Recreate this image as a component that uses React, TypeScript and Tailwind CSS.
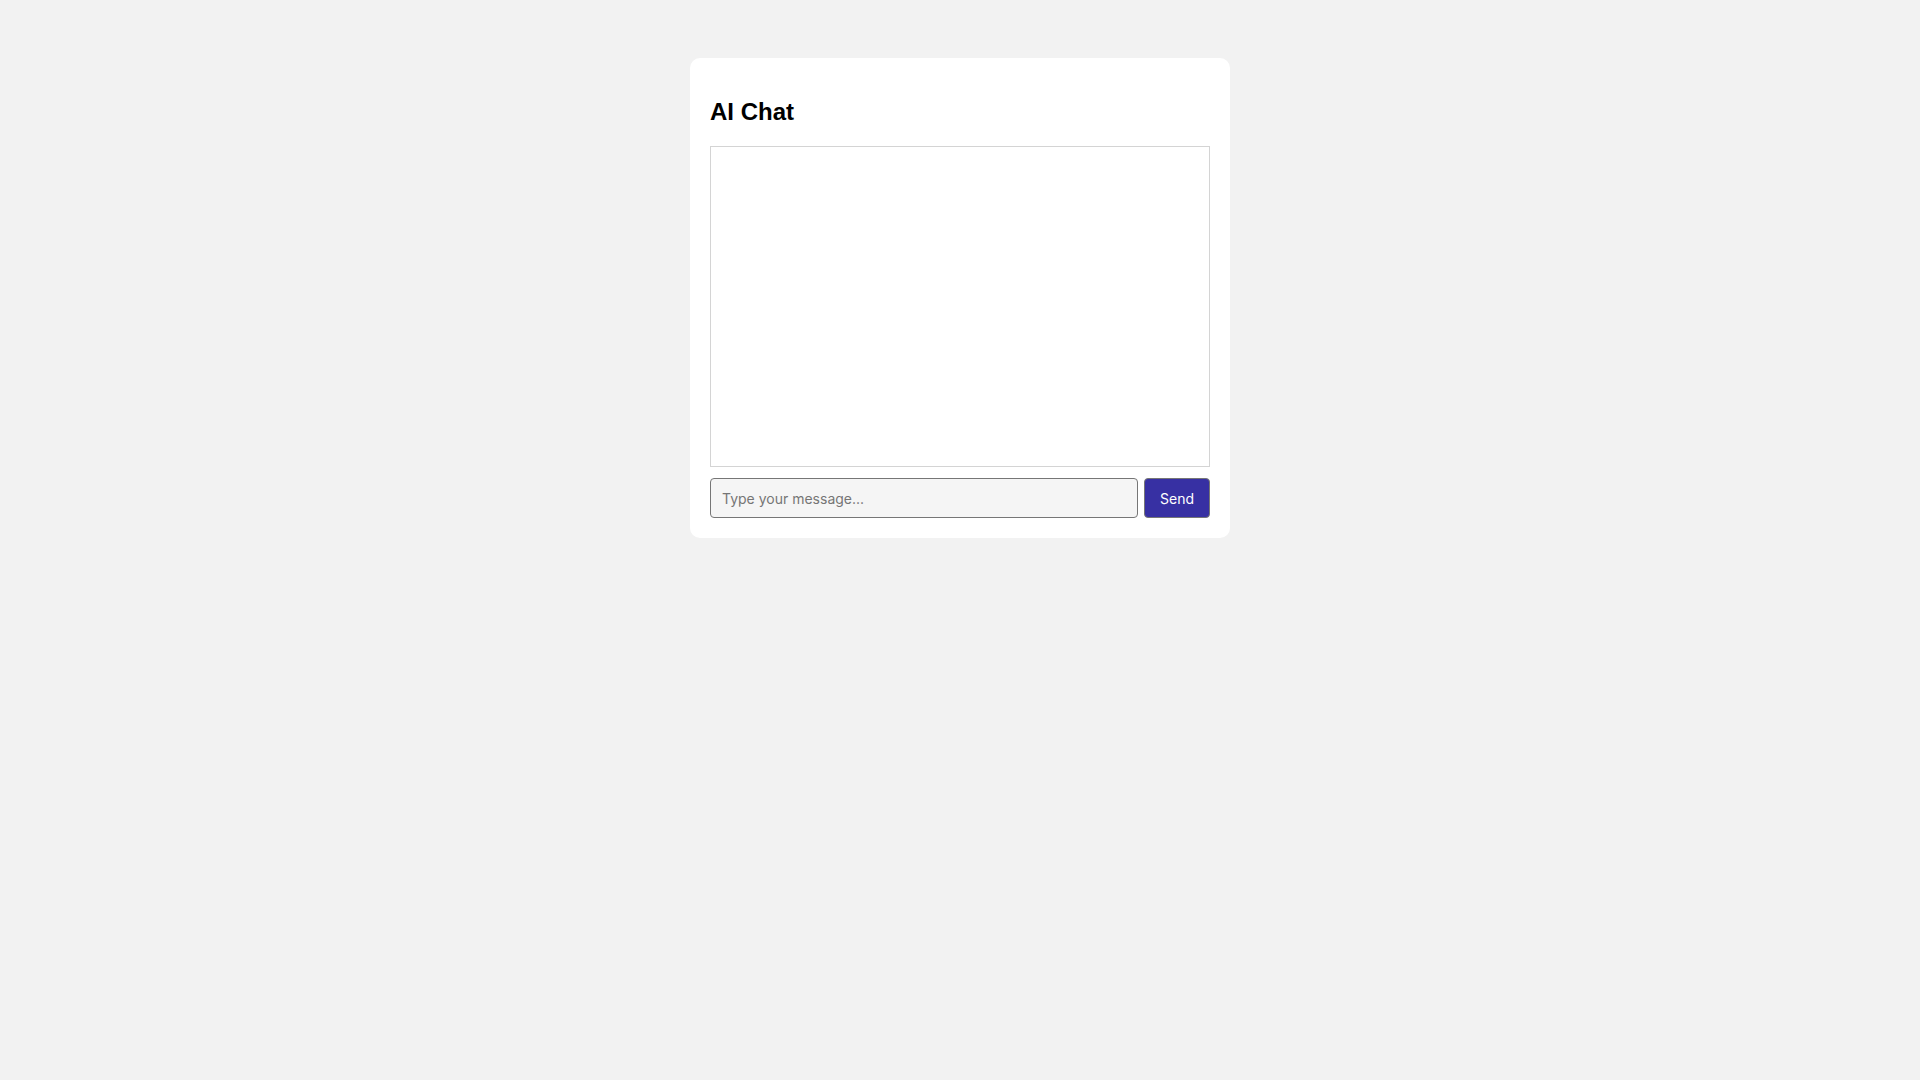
import { useState } from "react";

export default function App() {
  const [text, setText] = useState("");

  return (
    <div className="min-h-screen bg-[#f2f2f2] pt-[58px] font-['Inter',sans-serif]">
      <div className="mx-auto w-[540px] rounded-[10px] bg-white px-5 pb-5 pt-5">
        <h2 className="my-5 font-['Liberation_Sans',Arial,sans-serif] text-[24px] font-bold leading-[28px] text-black">
          AI Chat
        </h2>
        <div className="h-[321px] border border-[#d4d4d4] bg-white" />
        <div className="mt-[11px] flex gap-[6px]">
          <input
            value={text}
            onChange={(e) => setText(e.target.value)}
            placeholder="Type your message..."
            className="h-[40px] flex-1 rounded-[4px] border border-[#767676] bg-[#f5f5f5] px-[11px] text-[14px] text-black placeholder:text-[#757575] outline-none"
          />
          <button className="h-[40px] w-[66px] rounded-[4px] border border-[#767676] bg-[#3730a3] text-[14px] text-white">
            Send
          </button>
        </div>
      </div>
    </div>
  );
}
